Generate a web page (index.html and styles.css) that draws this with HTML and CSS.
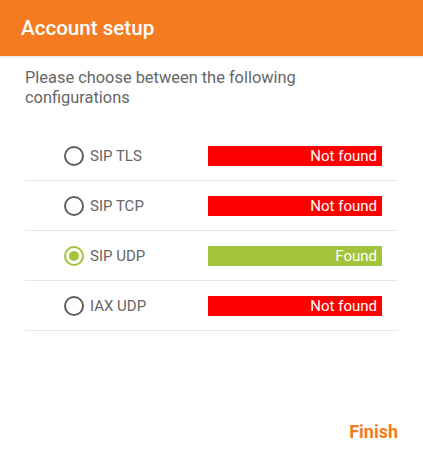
FILE: index.html
```html
<!DOCTYPE html>
<html>
<head>
<meta charset="utf-8">
<link rel="stylesheet" href="styles.css">
</head>
<body>
<div class="dialog">
  <div class="header">Account setup</div>
  <div class="content">
    <p class="desc">Please choose between the following configurations</p>
    <div class="list">
      <div class="row">
        <span class="radio"></span><span class="label">SIP TLS</span>
        <span class="status bad">Not found</span>
      </div>
      <div class="row">
        <span class="radio"></span><span class="label">SIP TCP</span>
        <span class="status bad">Not found</span>
      </div>
      <div class="row">
        <span class="radio checked"></span><span class="label">SIP UDP</span>
        <span class="status good">Found</span>
      </div>
      <div class="row">
        <span class="radio"></span><span class="label">IAX UDP</span>
        <span class="status bad">Not found</span>
      </div>
    </div>
  </div>
  <div class="footer"><span class="finish">Finish</span></div>
</div>
</body>
</html>
```
FILE: styles.css
```css
html, body {
  margin: 0;
  padding: 0;
  background: #fff;
}
body {
  font-family: Roboto, "Liberation Sans", sans-serif;
  width: 423px;
  height: 454px;
  overflow: hidden;
}
.dialog {
  display: flex;
  flex-direction: column;
  height: 454px;
}
.header {
  height: 56px;
  background: #f47b20;
  color: #fff;
  font-size: 20.6px;
  font-weight: 500;
  line-height: 56px;
  padding-left: 21px;
  box-shadow: 0 1px 2px rgba(0,0,0,0.12);
}
.content {
  padding: 12px 25px 0 25px;
  flex: 1;
}
.desc {
  margin: 0;
  width: 310px;
  font-size: 16.4px;
  line-height: 20px;
  color: #666;
}
.list {
  margin-top: 23px;
}
.row {
  height: 49px;
  border-bottom: 1px solid #e8e8e8;
  display: flex;
  align-items: center;
}
.radio {
  box-sizing: border-box;
  width: 20px;
  height: 20px;
  border-radius: 50%;
  border: 2px solid #5f5f5f;
  margin-left: 39px;
  margin-right: 6px;
  position: relative;
}
.radio.checked {
  border-color: #a1c43a;
}
.radio.checked::after {
  content: "";
  position: absolute;
  left: 3px;
  top: 3px;
  width: 10px;
  height: 10px;
  border-radius: 50%;
  background: #a1c43a;
}
.label {
  font-size: 15px;
  color: #666;
  width: 118px;
}
.status {
  width: 174px;
  height: 20px;
  line-height: 20px;
  box-sizing: border-box;
  padding-right: 5px;
  text-align: right;
  color: #fff;
  font-size: 15px;
}
.status.bad {
  background: #ff0000;
}
.status.good {
  background: #a1c43a;
}
.footer {
  height: 44px;
  display: flex;
  justify-content: flex-end;
  align-items: center;
  padding-right: 25px;
}
.finish {
  color: #f47b20;
  font-weight: bold;
  font-size: 18px;
  line-height: 22px;
}
```
